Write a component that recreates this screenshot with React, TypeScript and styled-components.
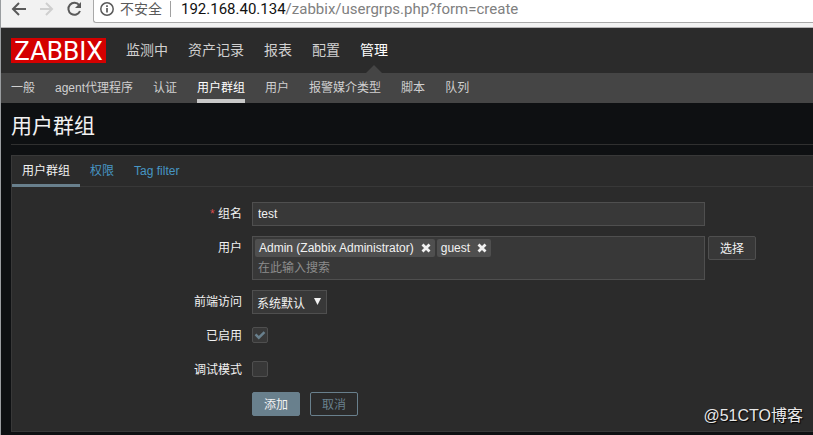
import React, { useState } from "react";
import styled, { createGlobalStyle, css } from "styled-components";

const sans = `"Liberation Sans", Arial, "Noto Sans CJK SC", sans-serif`;

const GlobalStyle = createGlobalStyle`
  *, *::before, *::after { box-sizing: border-box; }
  html { background: #0e1012; }
  body {
    margin: 0;
    color: #f2f2f2;
    font-family: ${sans};
    font-size: 12px;
    line-height: 18px;
    overflow: hidden;
  }
  button, input, select { font: inherit; color: inherit; }
  ul { list-style: none; margin: 0; padding: 0; }
`;

const Window = styled.div`
  min-height: 100vh;
  border-left: 1px solid #9a9da0;
  background: #0e1012;
`;

const BrowserBar = styled.div`
  display: flex;
  align-items: flex-start;
  height: 28px;
  background: #f2f2f2;
  border-bottom: 1px solid #b4b2b4;
`;

const BrowserButtons = styled.div`
  display: flex;
  gap: 12px;
  width: 92px;
  padding-left: 9px;
`;

const BrowserButton = styled.button`
  width: 16px;
  height: 18px;
  padding: 0;
  border: 0;
  background: none;
  color: #5a5a5a;
  &:disabled { color: #cfcfcf; }
  svg { display: block; }
`;

const AddressBox = styled.div`
  display: flex;
  flex: 1;
  align-items: center;
  height: 23px;
  padding: 0 0 4px 5px;
  background: #fff;
  border: solid #a9a9a9;
  border-width: 0 0 1px 1px;
  border-radius: 0 0 0 3px;
  color: #5a5a5a;
  white-space: nowrap;
`;

const Insecure = styled.span`
  margin-left: 5px;
  padding-right: 8px;
  border-right: 1px solid #a0a0a0;
  font-size: 14px;
  line-height: 16px;
`;

const Url = styled.span`
  margin-left: 10px;
  font-family: Roboto, "Noto Sans", sans-serif;
  font-size: 15px;
  color: #808080;
`;

const Host = styled.span`
  color: #111;
`;

const Header = styled.header`
  display: flex;
  align-items: center;
  height: 45px;
  padding-left: 10px;
  background: #2b2b2b;
`;

const Logo = styled.a`
  width: 95px;
  height: 25px;
  background: #d40000;
  color: #fff;
  font-family: Roboto, sans-serif;
  font-size: 26px;
  line-height: 26px;
  text-align: center;
  text-decoration: none;
`;

const MainNav = styled.ul`
  display: flex;
  align-self: stretch;
  gap: 20px;
  margin-left: 20px;
`;

const MainLink = styled.a<{ $active?: boolean }>`
  position: relative;
  display: block;
  height: 45px;
  font-size: 14px;
  line-height: 45px;
  color: ${(p) => (p.$active ? "#fff" : "#d0d0d0")};
  text-decoration: none;
  ${(p) =>
    p.$active &&
    css`
      &::after {
        content: "";
        position: absolute;
        bottom: 0;
        left: 50%;
        margin-left: -8px;
        border: 8px solid transparent;
        border-top: 0;
        border-bottom-color: #454545;
      }
    `}
`;

const SubNav = styled.ul`
  display: flex;
  gap: 20px;
  height: 30px;
  padding-left: 10px;
  background: #454545;
`;

const SubLink = styled.a<{ $active?: boolean }>`
  display: block;
  height: 30px;
  line-height: 31px;
  color: ${(p) => (p.$active ? "#fff" : "#d0d0d0")};
  border-bottom: 4px solid ${(p) => (p.$active ? "#c8c8c8" : "transparent")};
  text-decoration: none;
  white-space: nowrap;
`;

const Main = styled.main`
  padding-left: 10px;
`;

const Title = styled.h1`
  margin: 0 0 10px;
  height: 42px;
  border-bottom: 1px solid #303030;
  font-size: 21px;
  font-weight: 400;
  line-height: 46px;
`;

const Panel = styled.form`
  padding-bottom: 15px;
  background: #2b2b2b;
  border: solid #383838;
  border-width: 1px 0 1px 1px;
`;

const Tabs = styled.ul`
  display: flex;
  height: 31px;
  margin-bottom: 15px;
  border-bottom: 1px solid #383838;
`;

const Tab = styled.a<{ $active?: boolean }>`
  display: block;
  height: 31px;
  padding: 0 10px;
  line-height: 30px;
  color: ${(p) => (p.$active ? "#f2f2f2" : "#4796c4")};
  border-bottom: 3px solid ${(p) => (p.$active ? "#69808d" : "transparent")};
  text-decoration: none;
`;

const Fields = styled.div`
  display: grid;
  gap: 10px;
`;

const Row = styled.div`
  display: grid;
  grid-template-columns: 230px 1fr;
  column-gap: 10px;
  min-height: 24px;
`;

const Label = styled.label<{ $required?: boolean }>`
  height: 24px;
  text-align: right;
  line-height: 24px;
  ${(p) =>
    p.$required &&
    css`
      &::before {
        content: "* ";
        color: #d64e4e;
      }
    `}
`;

const Controls = styled.div<{ $gap?: number }>`
  display: flex;
  align-items: flex-start;
  gap: ${(p) => p.$gap ?? 3}px;
`;

const field = css`
  background: #383838;
  border: 1px solid #4f4f4f;
  color: #f2f2f2;
  outline: 0;
`;

const TextField = styled.input`
  ${field}
  width: 453px;
  max-width: 100%;
  height: 24px;
  padding: 0 5px;
`;

const MultiSelect = styled.div`
  ${field}
  width: 453px;
  padding: 2px;
`;

const Tags = styled.ul`
  display: flex;
  flex-wrap: wrap;
  gap: 2px;
`;

const Tag = styled.li`
  display: flex;
  align-items: center;
  gap: 7px;
  height: 18px;
  padding: 0 4px;
  background: #4f4f4f;
  border-radius: 2px;
`;

const RemoveButton = styled.button`
  width: 10px;
  height: 10px;
  padding: 0;
  border: 0;
  background: none;
  svg { display: block; }
`;

const Search = styled.input`
  display: block;
  width: 100%;
  height: 20px;
  padding: 2px 3px 0;
  border: 0;
  outline: 0;
  background: none;
  &::placeholder { color: #8c8c8c; opacity: 1; }
`;

const SelectWrap = styled.span`
  position: relative;
  svg {
    position: absolute;
    top: 8px;
    right: 6px;
    pointer-events: none;
  }
`;

const Select = styled.select`
  ${field}
  display: block;
  appearance: none;
  width: 75px;
  height: 24px;
  padding: 3px 16px 0 4px;
`;

const Checkbox = styled.input`
  ${field}
  appearance: none;
  width: 16px;
  height: 16px;
  margin: 3px 0 0;
  border-radius: 2px;
`;

const CheckWrap = styled.span`
  position: relative;
  display: flex;
  svg {
    position: absolute;
    top: 3px;
    left: 0;
    pointer-events: none;
  }
`;

const Button = styled.button<{ $kind: "plain" | "primary" | "outline" }>`
  width: 48px;
  height: 24px;
  padding: 2px 0 0;
  border: 1px solid ${(p) => (p.$kind === "plain" ? "#4f4f4f" : "#69808d")};
  border-radius: 2px;
  background: ${(p) => ({ plain: "#383838", primary: "#69808d", outline: "transparent" })[p.$kind]};
  color: ${(p) => (p.$kind === "outline" ? "#69808d" : "#f2f2f2")};
`;

const Watermark = styled.div`
  position: absolute;
  right: 10px;
  bottom: 8px;
  font-size: 16px;
  line-height: 22px;
  color: #e8e8e8;
  text-shadow: 1px 1px 1px #000;
`;

const mainItems = ["监测中", "资产记录", "报表", "配置", "管理"];
const subItems = ["一般", "agent代理程序", "认证", "用户群组", "用户", "报警媒介类型", "脚本", "队列"];
const tabItems = ["用户群组", "权限", "Tag filter"];

const ArrowIcon = ({ flip }: { flip?: boolean }) => (
  <svg width="16" height="18" viewBox="0 0 16 18" fill="none" stroke="currentColor" strokeWidth="2">
    <path d={flip ? "M2 9h12M8 3l6 6-6 6" : "M16 9H3M9 3L3 9l6 6"} />
  </svg>
);

const ReloadIcon = () => (
  <svg width="16" height="18" viewBox="0 0 16 18" fill="none" stroke="currentColor" strokeWidth="2">
    <path d="M13.2 5.2A6 6 0 1 0 14 11" />
    <path d="M15 2v6H9z" fill="currentColor" stroke="none" />
  </svg>
);

const InfoIcon = () => (
  <svg width="16" height="16" viewBox="0 0 16 16" fill="none" stroke="currentColor">
    <circle cx="8" cy="8" r="6.2" strokeWidth="1.5" />
    <path d="M8 7v4.5M8 4.3v1.7" strokeWidth="1.7" />
  </svg>
);

const CrossIcon = () => (
  <svg width="10" height="10" viewBox="0 0 10 10" stroke="#f2f2f2" strokeWidth="2.8">
    <path d="M1.5 1.5l7 7M8.5 1.5l-7 7" />
  </svg>
);

function CheckField({ id, initial }: { id: string; initial: boolean }) {
  const [on, setOn] = useState(initial);
  return (
    <CheckWrap>
      <Checkbox id={id} type="checkbox" checked={on} onChange={(e) => setOn(e.target.checked)} />
      {on && (
        <svg width="16" height="16" viewBox="0 0 16 16" fill="none" stroke="#69808d" strokeWidth="2.4">
          <path d="M3.5 7.3l3.3 3.4 5.7-5.5" />
        </svg>
      )}
    </CheckWrap>
  );
}

export default function App() {
  const [name, setName] = useState("test");
  const [users, setUsers] = useState(["Admin (Zabbix Administrator)", "guest"]);

  return (
    <Window>
      <GlobalStyle />
      <BrowserBar>
        <BrowserButtons>
          <BrowserButton aria-label="后退"><ArrowIcon /></BrowserButton>
          <BrowserButton aria-label="前进" disabled><ArrowIcon flip /></BrowserButton>
          <BrowserButton aria-label="刷新"><ReloadIcon /></BrowserButton>
        </BrowserButtons>
        <AddressBox>
          <InfoIcon />
          <Insecure>不安全</Insecure>
          <Url><Host>192.168.40.134</Host>/zabbix/usergrps.php?form=create</Url>
        </AddressBox>
      </BrowserBar>
      <Header>
        <Logo href="#">ZABBIX</Logo>
        <nav>
          <MainNav>
            {mainItems.map((t) => (
              <li key={t}><MainLink href="#" $active={t === "管理"}>{t}</MainLink></li>
            ))}
          </MainNav>
        </nav>
      </Header>
      <nav>
        <SubNav>
          {subItems.map((t) => (
            <li key={t}><SubLink href="#" $active={t === "用户群组"}>{t}</SubLink></li>
          ))}
        </SubNav>
      </nav>
      <Main>
        <Title>用户群组</Title>
        <Panel onSubmit={(e) => e.preventDefault()}>
          <Tabs>
            {tabItems.map((t, i) => (
              <li key={t}><Tab href="#" $active={i === 0}>{t}</Tab></li>
            ))}
          </Tabs>
          <Fields>
            <Row>
              <Label htmlFor="name" $required>组名</Label>
              <Controls>
                <TextField id="name" value={name} onChange={(e) => setName(e.target.value)} />
              </Controls>
            </Row>
            <Row>
              <Label htmlFor="users">用户</Label>
              <Controls>
                <MultiSelect>
                  <Tags>
                    {users.map((u) => (
                      <Tag key={u}>
                        {u}
                        <RemoveButton
                          type="button"
                          aria-label={u}
                          onClick={() => setUsers(users.filter((x) => x !== u))}
                        >
                          <CrossIcon />
                        </RemoveButton>
                      </Tag>
                    ))}
                  </Tags>
                  <Search id="users" placeholder="在此输入搜索" />
                </MultiSelect>
                <Button type="button" $kind="plain">选择</Button>
              </Controls>
            </Row>
            <Row>
              <Label htmlFor="access">前端访问</Label>
              <Controls>
                <SelectWrap>
                  <Select id="access"><option>系统默认</option></Select>
                  <svg width="7" height="7" viewBox="0 0 7 7"><path d="M0 0h7L3.5 7z" fill="#f2f2f2" /></svg>
                </SelectWrap>
              </Controls>
            </Row>
            <Row>
              <Label htmlFor="enabled">已启用</Label>
              <Controls><CheckField id="enabled" initial /></Controls>
            </Row>
            <Row>
              <Label htmlFor="debug">调试模式</Label>
              <Controls><CheckField id="debug" initial={false} /></Controls>
            </Row>
            <Row>
              <span />
              <Controls $gap={10}>
                <Button type="submit" $kind="primary">添加</Button>
                <Button type="button" $kind="outline">取消</Button>
              </Controls>
            </Row>
          </Fields>
        </Panel>
      </Main>
      <Watermark>@51CTO博客</Watermark>
    </Window>
  );
}
